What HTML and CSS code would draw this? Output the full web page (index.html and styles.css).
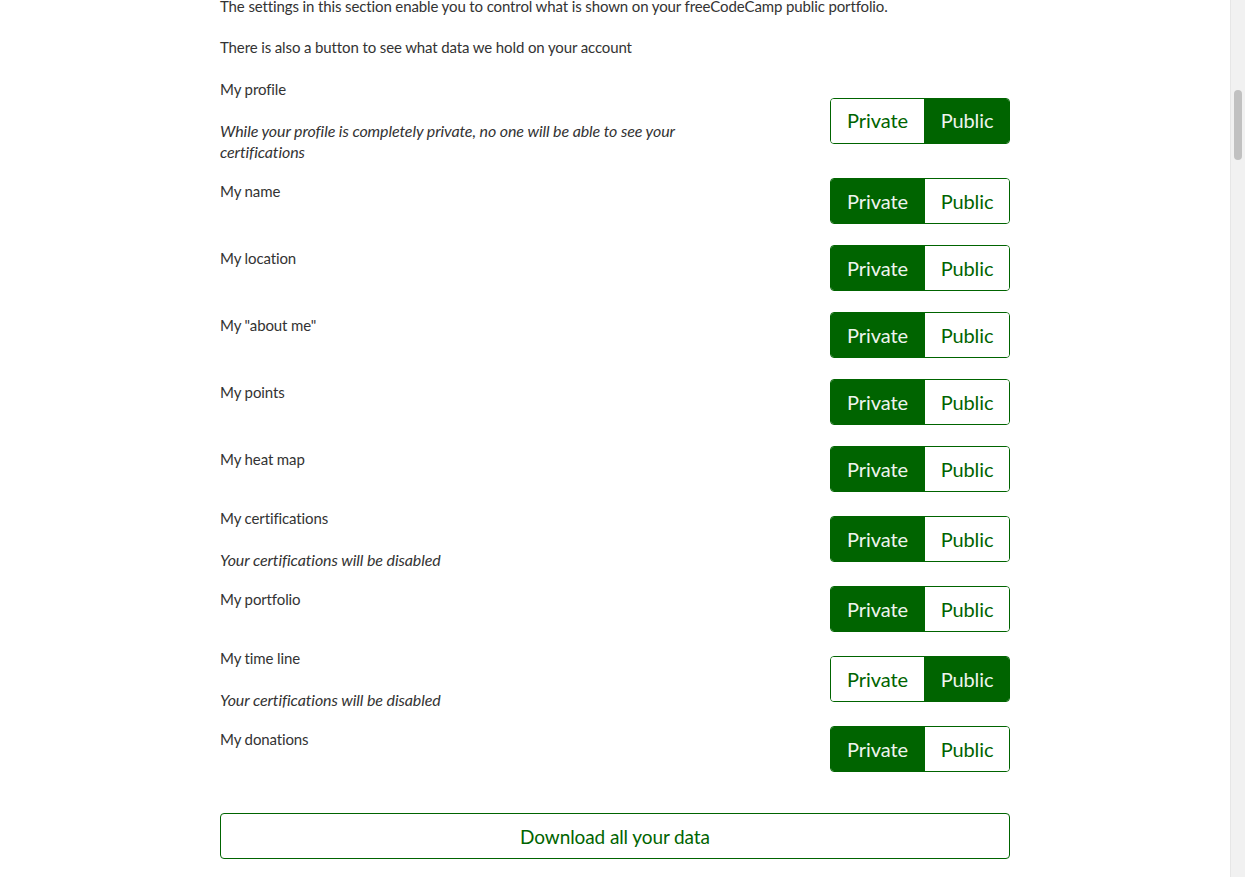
FILE: index.html
```html
<!DOCTYPE html>
<html lang="en">
<head>
<meta charset="utf-8">
<title>Privacy settings</title>
<link rel="stylesheet" href="styles.css">
</head>
<body>
<div class="viewport">
  <main class="main">
    <section class="settings">
      <p class="intro">The settings in this section enable you to control what is shown on your freeCodeCamp public portfolio.</p>
      <p class="intro">There is also a button to see what data we hold on your account</p>

      <div class="rows">
        <div class="row">
          <div class="info">
            <p class="label">My profile</p>
            <p class="note">While your profile is completely private, no one will be able to see your certifications</p>
          </div>
          <div class="toggle"><span class="opt">Private</span><span class="opt on">Public</span></div>
        </div>
        <div class="row simple">
          <div class="info"><p class="label">My name</p></div>
          <div class="toggle"><span class="opt on">Private</span><span class="opt">Public</span></div>
        </div>
        <div class="row simple">
          <div class="info"><p class="label">My location</p></div>
          <div class="toggle"><span class="opt on">Private</span><span class="opt">Public</span></div>
        </div>
        <div class="row simple">
          <div class="info"><p class="label">My "about me"</p></div>
          <div class="toggle"><span class="opt on">Private</span><span class="opt">Public</span></div>
        </div>
        <div class="row simple">
          <div class="info"><p class="label">My points</p></div>
          <div class="toggle"><span class="opt on">Private</span><span class="opt">Public</span></div>
        </div>
        <div class="row simple">
          <div class="info"><p class="label">My heat map</p></div>
          <div class="toggle"><span class="opt on">Private</span><span class="opt">Public</span></div>
        </div>
        <div class="row">
          <div class="info">
            <p class="label">My certifications</p>
            <p class="note">Your certifications will be disabled</p>
          </div>
          <div class="toggle"><span class="opt on">Private</span><span class="opt">Public</span></div>
        </div>
        <div class="row simple">
          <div class="info"><p class="label">My portfolio</p></div>
          <div class="toggle"><span class="opt on">Private</span><span class="opt">Public</span></div>
        </div>
        <div class="row">
          <div class="info">
            <p class="label">My time line</p>
            <p class="note">Your certifications will be disabled</p>
          </div>
          <div class="toggle"><span class="opt">Private</span><span class="opt on">Public</span></div>
        </div>
        <div class="row simple">
          <div class="info"><p class="label">My donations</p></div>
          <div class="toggle"><span class="opt on">Private</span><span class="opt">Public</span></div>
        </div>
      </div>

      <button class="download" type="button">Download all your data</button>
    </section>
  </main>
  <div class="scrollbar"><div class="thumb"></div></div>
</div>
</body>
</html>
```
FILE: styles.css
```css
* { box-sizing: border-box; }
html, body { margin: 0; padding: 0; }
body {
  background: #fff;
  color: #333;
  font-family: Lato, "Liberation Sans", sans-serif;
  font-size: 15px;
  line-height: 21px;
  letter-spacing: -0.12px;
}
.viewport {
  display: flex;
  height: 877px;
  overflow: hidden;
}
.main {
  flex: 1;
  overflow: hidden;
}
.settings {
  width: 790px;
  margin: -4px auto 0;
}
.intro {
  margin: 0 0 20px;
}
.rows {
  display: flex;
  flex-direction: column;
  gap: 11px;
  margin-top: 21px;
}
.row {
  display: flex;
  align-items: center;
  justify-content: space-between;
}
.info {
  width: 480px;
}
.label {
  margin: 0 0 20px;
}
.note {
  margin: 0;
  font-style: italic;
  font-size: 16px;
  letter-spacing: -0.1px;
}
.toggle {
  display: flex;
  margin: 5px 0;
  border: 1px solid #006400;
  border-radius: 4px;
  overflow: hidden;
  height: 46px;
}
.opt {
  display: flex;
  align-items: center;
  justify-content: center;
  font-size: 20px;
  letter-spacing: -0.1px;
  color: #006400;
  background: #fff;
}
.opt:first-child { width: 94px; border-right: 1px solid #006400; }
.opt:last-child { width: 84px; }
.opt.on {
  background: #006400;
  color: #eef4ee;
}
.download {
  display: block;
  width: 100%;
  height: 46px;
  margin-top: 36px;
  background: #fff;
  border: 1px solid #006400;
  border-radius: 4px;
  color: #006400;
  font-family: Lato, "Liberation Sans", sans-serif;
  font-size: 19px;
  letter-spacing: -0.1px;
}
.scrollbar {
  width: 15px;
  flex: none;
  background: #f1f1f1;
  border-left: 1px solid #e6e6e6;
  padding: 90px 3px 0 3px;
}
.thumb {
  height: 70px;
  background: #c1c1c1;
  border-radius: 4px;
}
```
